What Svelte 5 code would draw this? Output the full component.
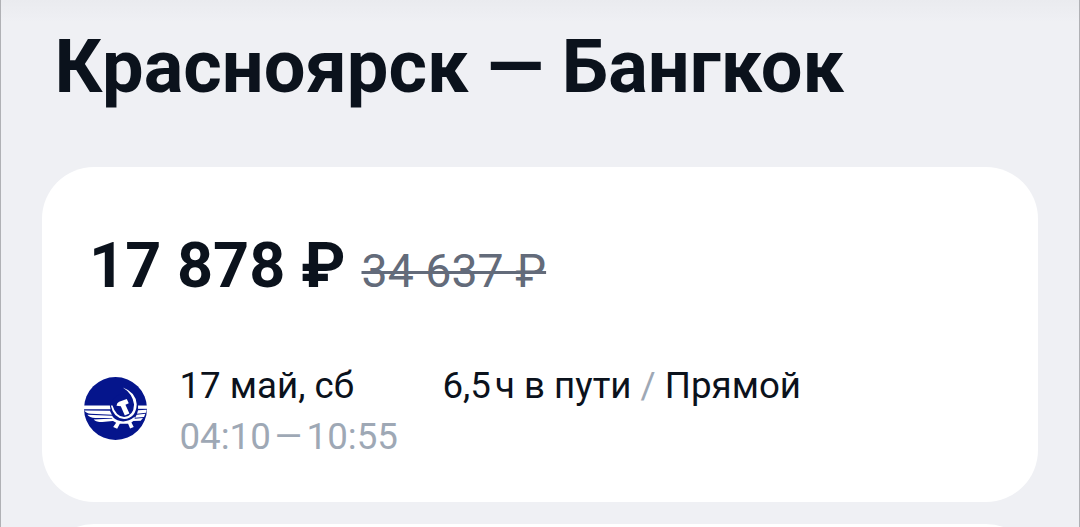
<script lang="ts">
	const route = { from: 'Красноярск', to: 'Бангкок' };
	const ticket = {
		price: '17 878 ₽',
		oldPrice: '34 637 ₽',
		date: '17 май, сб',
		departure: '04:10',
		arrival: '10:55',
		hours: '6,5',
		transfers: 'Прямой'
	};
</script>

<main class="screen">
	<h1 class="title">{route.from} — {route.to}</h1>

	<article class="ticket">
		<div class="prices">
			<span class="price">{ticket.price}</span>
			<span class="old-price">{ticket.oldPrice}</span>
		</div>

		<div class="flight">
			<svg class="airline" viewBox="28 37 190 190" aria-hidden="true">
				<circle cx="123" cy="132" r="95" fill="#05158c" />
				<g fill="#fff">
					<!-- left wing -->
					<path d="M28 123H106L108 134H28Z" />
					<path d="M29 138L106 139L112 151L49 148Q34 147 29 138Z" />
					<path d="M38 151L113 154L117 161L62 161Q44 160 38 151Z" />
					<path d="M57 165L118 162L122 169L83 173Q65 173 57 165Z" />
					<!-- right wing -->
					<path d="M191 123H218V133H191Z" />
					<path d="M191 137L217 136L215 145L188 148Z" />
					<path d="M187 151L213 148L209 158L182 160Z" />
					<path d="M180 163L206 161L199 169L175 170Z" />
					<!-- gear -->
					<path d="M113 157Q145 185 181 157L181 167L171 174L178 188L167 192L161 178H136L128 193L116 188L125 175L113 168Z" />
				</g>
				<!-- sickle -->
				<circle cx="149" cy="127" r="40" fill="#05158c" />
				<g fill="#fff">
					<path d="M145 69Q184 83 187 119Q185 161 149 164Q116 160 109 123H114Q124 156 149 158Q178 154 179 120Q175 88 145 69Z" />
					<!-- hammer -->
					<path d="M126 124Q127 115 134 112L157 103L163 116L153 121L165 147L151 153L139 125Z" />
				</g>
			</svg>
			<div class="when">
				<div class="date">{ticket.date}</div>
				<div class="time">{ticket.departure}<span class="dash">—</span>{ticket.arrival}</div>
			</div>
			<div class="details">
				<span class="hours">{ticket.hours}</span>ч в пути <span class="slash">/</span> {ticket.transfers}
			</div>
		</div>
	</article>

	<article class="ticket next"></article>
</main>

<style>
	:global(body) {
		background: #eff0f4;
	}

	.screen {
		box-sizing: border-box;
		height: 527px;
		overflow: hidden;
		padding: 24px 41px 0;
		border: solid #b0b1b5;
		border-width: 0 1px;
		background: linear-gradient(#eaebef, #eff0f4 22px);
		font-family: Roboto, sans-serif;
		color: #0b121c;
	}

	.title {
		margin: 0 0 57px 12.5px;
		font-size: 74px;
		line-height: 86px;
		font-weight: 700;
		white-space: nowrap;
	}

	.ticket {
		box-sizing: border-box;
		height: 335px;
		padding: 62px 42px 0;
		background: #fff;
		border-radius: 52px;
	}

	.next {
		margin-top: 22px;
	}

	.prices {
		display: flex;
		align-items: baseline;
		gap: 16px;
		height: 138px;
		white-space: pre;
	}

	.price {
		margin-left: 5px;
		font-size: 63px;
		line-height: 74px;
		font-weight: 700;
	}

	.old-price {
		font-size: 46.5px;
		color: #636b7a;
		text-decoration: line-through;
		text-decoration-thickness: 3px;
	}

	.flight {
		display: flex;
		font-size: 36.7px;
		line-height: 51px;
		white-space: nowrap;
	}

	.airline {
		width: 63px;
		height: 63px;
		margin: 10px 32.5px 0 0;
	}

	.when,
	.details {
		margin-top: -7px;
	}

	.when {
		width: 263px;
	}

	.dash {
		display: inline-block;
		margin: 0 3.5px;
		transform: scaleX(0.95);
	}

	.hours {
		margin-right: 4px;
	}

	.time,
	.slash {
		color: #9ea8b5;
	}
</style>
